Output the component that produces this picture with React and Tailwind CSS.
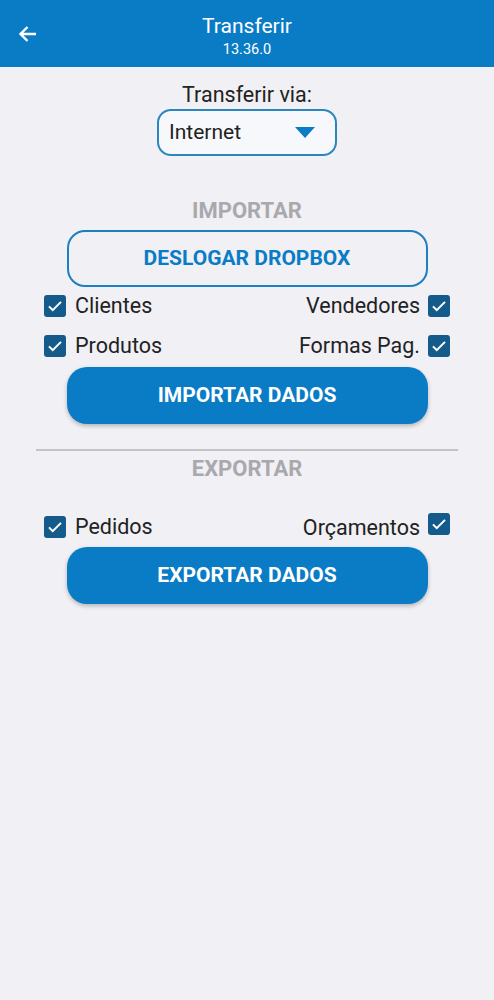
import React, { useState } from "react";

const Check = ({ checked, onClick, className = "" }) => (
  <div
    onClick={onClick}
    className={`w-[22px] h-[22px] shrink-0 rounded-[3px] flex items-center justify-center cursor-pointer ${
      checked ? "bg-[#145a8a]" : "border-2 border-[#145a8a]"
    } ${className}`}
  >
    {checked && (
      <svg width="18" height="18" viewBox="0 0 24 24" fill="none">
        <path d="M4 12.5l5 5L20 6.5" stroke="white" strokeWidth="2.8" />
      </svg>
    )}
  </div>
);

const App = () => {
  const [opts, setOpts] = useState({
    clientes: true,
    vendedores: true,
    produtos: true,
    formas: true,
    pedidos: true,
    orcamentos: true,
  });

  const toggle = (k) => setOpts((prev) => ({ ...prev, [k]: !prev[k] }));

  return (
    <div className="w-[494px] min-h-[1000px] bg-[#f0f0f5] font-['Roboto',sans-serif] text-[#222]">
      {/* header */}
      <div className="h-[67px] bg-[#0a7cc6] relative flex flex-col items-center pt-[13px] text-white">
        <button className="absolute left-[16px] top-[22px]">
          <svg width="24" height="24" viewBox="0 0 24 24" fill="none">
            <path d="M20 12H5M11.5 5L4.5 12l7 7" stroke="white" strokeWidth="2.4" />
          </svg>
        </button>
        <div className="text-[21px] leading-[26px]">Transferir</div>
        <div className="mt-[2px] text-[14.5px] leading-[18px]">13.36.0</div>
      </div>

      <div className="flex flex-col items-center">
        <div className="mt-[16px] text-[21.5px] leading-[24px]">Transferir via:</div>
        <div className="mt-[2px] w-[180px] h-[47px] rounded-[14px] border-2 border-[#2a86bd] bg-[#f7f8fb] flex items-center justify-between pl-[10px] pr-[20px]">
          <span className="text-[21px]">Internet</span>
          <svg width="20" height="11" viewBox="0 0 20 11">
            <path d="M0 0h20L10 11z" fill="#0a7cc6" />
          </svg>
        </div>

        <div className="mt-[43px] text-[22px] font-bold text-[#a9a9ad] leading-[24px]">IMPORTAR</div>

        <button className="mt-[7px] w-[361px] h-[57px] rounded-[18px] border-2 border-[#1d7fbf] text-[#0a7cc6] font-bold text-[21px]">
          DESLOGAR DROPBOX
        </button>

        <div className="w-full px-[44px]">
          <div className="flex items-center justify-between h-[38px]">
            <div className="flex items-center gap-[9px]">
              <Check checked={opts.clientes} onClick={() => toggle("clientes")} />
              <span className="text-[21.5px]">Clientes</span>
            </div>
            <div className="flex items-center gap-[8px]">
              <span className="text-[21.5px]">Vendedores</span>
              <Check checked={opts.vendedores} onClick={() => toggle("vendedores")} />
            </div>
          </div>
          <div className="flex items-center justify-between h-[42px]">
            <div className="flex items-center gap-[9px]">
              <Check checked={opts.produtos} onClick={() => toggle("produtos")} />
              <span className="text-[21.5px]">Produtos</span>
            </div>
            <div className="flex items-center gap-[8px]">
              <span className="text-[21.5px]">Formas Pag.</span>
              <Check checked={opts.formas} onClick={() => toggle("formas")} />
            </div>
          </div>
        </div>

        <button className="w-[361px] h-[57px] rounded-[20px] bg-[#0a7cc6] text-white font-bold text-[21px] shadow-[0_2px_4px_rgba(0,0,0,0.25)]">
          IMPORTAR DADOS
        </button>

        <div className="mt-[25px] w-[422px] h-[2px] bg-[#c4c4c8]" />

        <div className="mt-[6px] text-[22px] font-bold text-[#a9a9ad] leading-[24px]">EXPORTAR</div>

        <div className="w-full px-[44px] mt-[28px]">
          <div className="flex justify-between h-[36px]">
            <div className="flex items-center gap-[9px]">
              <Check checked={opts.pedidos} onClick={() => toggle("pedidos")} />
              <span className="text-[21.5px]">Pedidos</span>
            </div>
            <div className="flex items-start gap-[8px]">
              <span className="text-[21.5px] leading-[24px] mt-[7px]">Orçamentos</span>
              <Check checked={opts.orcamentos} onClick={() => toggle("orcamentos")} className="mt-[4px]" />
            </div>
          </div>
        </div>

        <button className="mt-[2px] w-[361px] h-[57px] rounded-[20px] bg-[#0a7cc6] text-white font-bold text-[21px] shadow-[0_2px_4px_rgba(0,0,0,0.25)]">
          EXPORTAR DADOS
        </button>
      </div>
    </div>
  );
};

export default App;
